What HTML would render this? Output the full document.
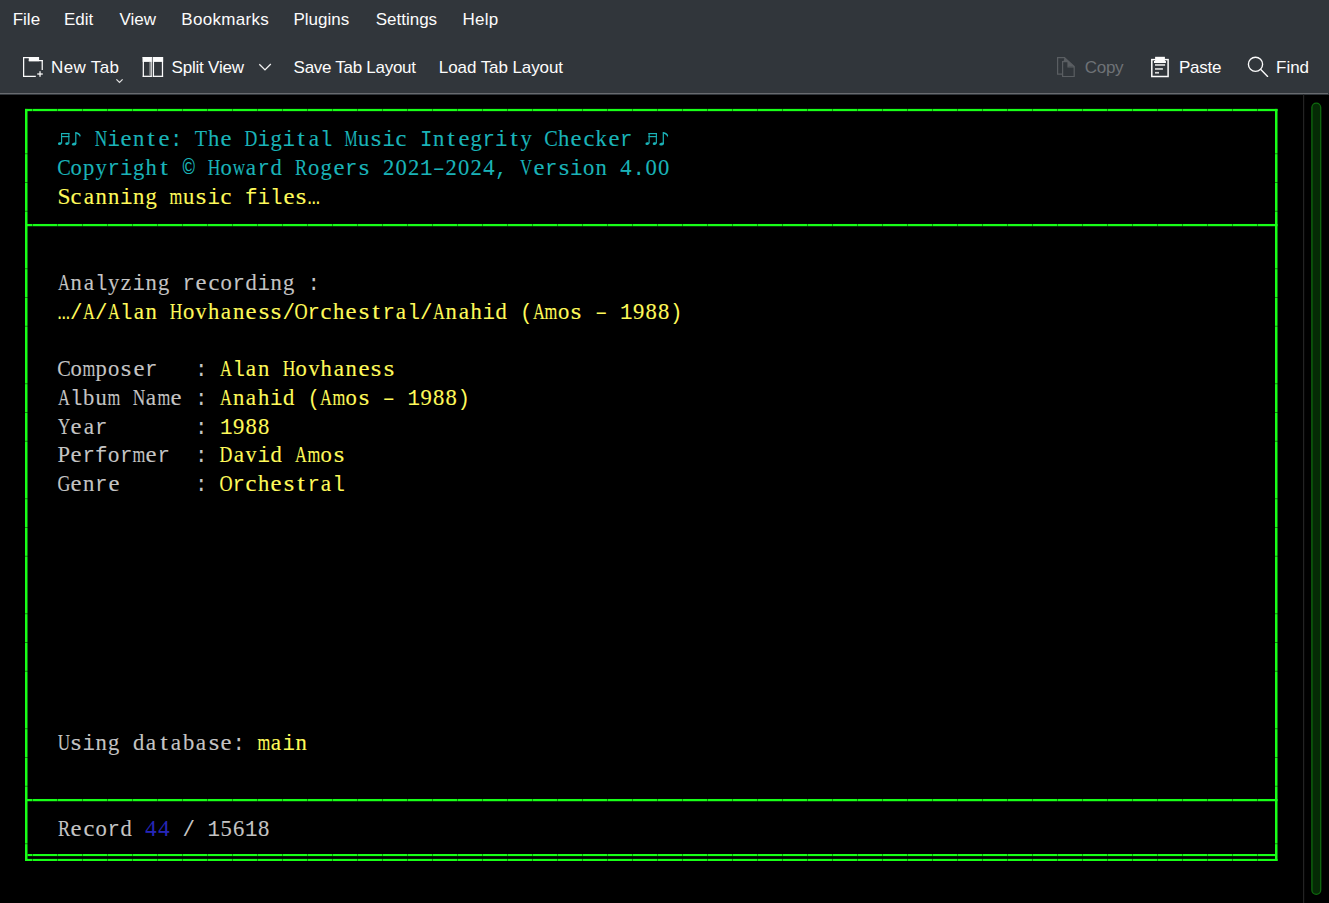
<!DOCTYPE html>
<html><head><meta charset="utf-8">
<style>
html,body{margin:0;padding:0}
body{width:1329px;height:903px;overflow:hidden;position:relative;background:#31363b;font-family:"Liberation Sans",sans-serif}
.ui{position:absolute;color:#fcfcfc;font-size:17px;line-height:20px;white-space:pre}
.sep{position:absolute;left:0;top:93px;width:1328px;height:1.3px;background:#686b6f}
.term{position:absolute;left:0;top:94.5px;width:1329px;height:809px;background:#000}
.t{position:absolute;left:57.5px;font-family:"Liberation Mono",monospace;font-size:20.83px;line-height:28.75px;white-space:pre;color:#c4c4c4;transform-origin:0 19px;transform:scaleY(1.05)}
.c{color:#1ab3b8}.y{color:#fffa5a}.g{color:#c4c4c4}.b{color:#2626b8}
svg{position:absolute;overflow:visible}
.ts{position:absolute;left:20px;width:1260px;height:28.75px;line-height:28.75px}.ts b{position:absolute;top:0;font-weight:normal;white-space:pre}.ts .s{top:0.30px;font-family:"Liberation Serif",serif;font-size:22.6px;-webkit-text-stroke:0.1px currentColor}.ts .m{top:2.3px;font-family:"Liberation Mono",monospace;font-size:20.83px;transform-origin:0 19px;transform:scaleY(1.05)}
</style></head><body>
<div class="ui" style="left:12.7px;top:10px">File</div>
<div class="ui" style="left:64px;top:10px">Edit</div>
<div class="ui" style="left:119.5px;top:10px">View</div>
<div class="ui" style="left:181.3px;top:10px;letter-spacing:0.3px">Bookmarks</div>
<div class="ui" style="left:293.5px;top:10px">Plugins</div>
<div class="ui" style="left:375.7px;top:10px">Settings</div>
<div class="ui" style="left:462.4px;top:10px;letter-spacing:0.3px">Help</div>

<svg style="left:0;top:0" width="1329" height="94" viewBox="0 0 1329 94">
 <!-- new tab icon -->
 <g fill="#fcfcfc">
  <rect x="23" y="57" width="1.25" height="20"/>
  <rect x="23" y="57" width="6" height="1.25"/>
  <rect x="28.8" y="57" width="10.3" height="4.2"/>
  <rect x="28.8" y="60" width="14" height="1.25"/>
  <rect x="41.6" y="60" width="1.25" height="10"/>
  <rect x="23" y="75.75" width="12.8" height="1.25"/>
  <rect x="37.2" y="73.4" width="5.6" height="1.25"/>
  <rect x="39.4" y="71.2" width="1.25" height="5.6"/>
 </g>
 <path d="M116.4 79.4 L119.5 82.4 L122.6 79.4" fill="none" stroke="#dedede" stroke-width="1.3"/>
 <!-- split view icon -->
 <g fill="#fcfcfc">
  <rect x="142.7" y="57" width="9" height="1.25"/>
  <rect x="142.7" y="57" width="9" height="4.9"/>
  <rect x="142.7" y="57" width="1.25" height="20"/>
  <rect x="142.7" y="75.7" width="9" height="1.25"/>
  <rect x="150.5" y="57" width="1.25" height="20"/>
  <rect x="152.8" y="57" width="10.3" height="4.9"/>
  <rect x="152.8" y="57" width="1.25" height="20"/>
  <rect x="152.8" y="75.7" width="10.3" height="1.25"/>
  <rect x="161.85" y="57" width="1.25" height="20"/>
 </g>
 <rect x="149.3" y="61.9" width="1.2" height="13.8" fill="#8a8d90"/>
 <path d="M259.3 64.2 L265 69.9 L270.8 64.1" fill="none" stroke="#f0f0f0" stroke-width="1.35"/>
 <!-- copy icon (disabled) -->
 <g fill="none" stroke="#5a5e62" stroke-width="1.2">
  <path d="M12.6 22.2 H7.6 V5.6 H14.5 L24.2 14.5 V24.5 H12.6 V9.6 H18 V15 H24.2" transform="translate(1050 52)"/>
 </g>
 <path d="M14.5 5.6 L24.2 14.5 H18 V9.6 H13.5 Z" transform="translate(1050 52)" fill="#5a5e62"/>
 <!-- paste icon -->
 <g transform="translate(1145 52)">
  <rect x="6.8" y="7.6" width="16.3" height="16.9" fill="none" stroke="#fcfcfc" stroke-width="1.5"/>
  <rect x="10.1" y="4.8" width="9.8" height="6.2" fill="#fcfcfc"/>
  <rect x="9" y="9" width="11.9" height="2" fill="#fcfcfc"/>
  <rect x="10" y="12.1" width="10.1" height="1.7" fill="#d8d8d8"/>
  <rect x="10" y="16.1" width="7.9" height="1.7" fill="#d8d8d8"/>
  <rect x="10" y="19.9" width="4" height="1.7" fill="#d8d8d8"/>
 </g>
 <!-- find icon -->
 <circle cx="1255.5" cy="64.3" r="7.1" fill="none" stroke="#fcfcfc" stroke-width="1.35"/>
 <path d="M1260.8 69.6 L1267.6 76.4" stroke="#fcfcfc" stroke-width="1.35" stroke-linecap="round"/>
</svg>

<div class="ui" style="left:51px;top:58px;letter-spacing:0.35px">New Tab</div>
<div class="ui" style="left:171.5px;top:58px;letter-spacing:-0.2px">Split View</div>
<div class="ui" style="left:293.6px;top:58px;letter-spacing:-0.28px">Save Tab Layout</div>
<div class="ui" style="left:438.8px;top:58px;letter-spacing:-0.08px">Load Tab Layout</div>
<div class="ui" style="left:1084.8px;top:58px;color:#6e7276;letter-spacing:-0.3px">Copy</div>
<div class="ui" style="left:1178.9px;top:58px;letter-spacing:-0.25px">Paste</div>
<div class="ui" style="left:1276px;top:58px">Find</div>
<div class="sep"></div>
<div class="term"></div>
<svg class="box" width="1329" height="903" viewBox="0 0 1329 903" style="position:absolute;left:0;top:0"><rect x="25.0" y="108.9" width="2.5" height="752.10" fill="#18ff18"/><rect x="1275.0" y="108.9" width="2.5" height="752.10" fill="#18ff18"/><rect x="25.0" y="108.9" width="1252.5" height="2.25" fill="#18ff18"/><rect x="25.0" y="223.97" width="1252.5" height="2.25" fill="#18ff18"/><rect x="25.0" y="798.98" width="1252.5" height="2.25" fill="#18ff18"/><rect x="27.5" y="854" width="1247.5" height="2.1" fill="#18ff18"/><rect x="25.0" y="858.9" width="1252.5" height="2.1" fill="#18ff18"/><line x1="32" y1="110.00" x2="1270" y2="110.00" stroke="#000" stroke-opacity="0.42" stroke-width="2.6" stroke-dasharray="1 24"/><line x1="32" y1="225.12" x2="1270" y2="225.12" stroke="#000" stroke-opacity="0.42" stroke-width="2.6" stroke-dasharray="1 24"/><line x1="32" y1="800.12" x2="1270" y2="800.12" stroke="#000" stroke-opacity="0.42" stroke-width="2.6" stroke-dasharray="1 24"/><line x1="32" y1="855.05" x2="1270" y2="855.05" stroke="#000" stroke-opacity="0.42" stroke-width="2.6" stroke-dasharray="1 24"/><line x1="32" y1="859.95" x2="1270" y2="859.95" stroke="#000" stroke-opacity="0.42" stroke-width="2.6" stroke-dasharray="1 24"/><g fill="#000" fill-opacity="0.45"><rect x="24.5" y="153.25" width="3.5" height="1"/><rect x="1274.5" y="153.25" width="3.5" height="1"/><rect x="24.5" y="182.00" width="3.5" height="1"/><rect x="1274.5" y="182.00" width="3.5" height="1"/><rect x="24.5" y="210.75" width="3.5" height="1"/><rect x="1274.5" y="210.75" width="3.5" height="1"/><rect x="24.5" y="268.25" width="3.5" height="1"/><rect x="1274.5" y="268.25" width="3.5" height="1"/><rect x="24.5" y="297.00" width="3.5" height="1"/><rect x="1274.5" y="297.00" width="3.5" height="1"/><rect x="24.5" y="325.75" width="3.5" height="1"/><rect x="1274.5" y="325.75" width="3.5" height="1"/><rect x="24.5" y="383.25" width="3.5" height="1"/><rect x="1274.5" y="383.25" width="3.5" height="1"/><rect x="24.5" y="412.00" width="3.5" height="1"/><rect x="1274.5" y="412.00" width="3.5" height="1"/><rect x="24.5" y="440.75" width="3.5" height="1"/><rect x="1274.5" y="440.75" width="3.5" height="1"/><rect x="24.5" y="498.25" width="3.5" height="1"/><rect x="1274.5" y="498.25" width="3.5" height="1"/><rect x="24.5" y="527.00" width="3.5" height="1"/><rect x="1274.5" y="527.00" width="3.5" height="1"/><rect x="24.5" y="555.75" width="3.5" height="1"/><rect x="1274.5" y="555.75" width="3.5" height="1"/><rect x="24.5" y="613.25" width="3.5" height="1"/><rect x="1274.5" y="613.25" width="3.5" height="1"/><rect x="24.5" y="642.00" width="3.5" height="1"/><rect x="1274.5" y="642.00" width="3.5" height="1"/><rect x="24.5" y="670.75" width="3.5" height="1"/><rect x="1274.5" y="670.75" width="3.5" height="1"/><rect x="24.5" y="728.25" width="3.5" height="1"/><rect x="1274.5" y="728.25" width="3.5" height="1"/><rect x="24.5" y="757.00" width="3.5" height="1"/><rect x="1274.5" y="757.00" width="3.5" height="1"/><rect x="24.5" y="785.75" width="3.5" height="1"/><rect x="1274.5" y="785.75" width="3.5" height="1"/><rect x="24.5" y="843.25" width="3.5" height="1"/><rect x="1274.5" y="843.25" width="3.5" height="1"/></g></svg>
<svg style="left:0;top:0" width="1329" height="903" viewBox="0 0 1329 903">
 <rect x="1303" y="94.5" width="1.2" height="809" fill="#232323"/>
 <rect x="1311.9" y="103.1" width="8.8" height="791.3" rx="4.4" ry="4.4" fill="#052a05" stroke="#0e6a0e" stroke-width="1.3"/>
</svg>

<svg style="left:0;top:0" width="1329" height="200" viewBox="0 0 1329 200">
<defs>
<g id="n2"><rect x="3.5" y="8.5" width="8.4" height="1.2"/><rect x="3.5" y="11.5" width="8.4" height="1.2"/><rect x="3.55" y="8.5" width="1.1" height="10.5"/><rect x="10.8" y="8.5" width="1.1" height="10.5"/><ellipse cx="2.3" cy="19.1" rx="1.9" ry="1.3" transform="rotate(-10 2.3 19.1)"/><ellipse cx="9.6" cy="19.1" rx="1.9" ry="1.3" transform="rotate(-10 9.6 19.1)"/></g>
<g id="n1"><rect x="5.2" y="7.6" width="1.2" height="12"/><ellipse cx="4.0" cy="19.6" rx="2.3" ry="1.45" transform="rotate(-10 4 19.6)"/><path d="M5.7 7.6 Q9.9 8.5 10.7 10.9 L9.8 12.9 Q10.1 10.8 5.7 9.1 Z"/></g>
</defs>
<g fill="#1ab3b8">
<use href="#n2" x="57.5" y="124.5"/><use href="#n1" x="70" y="124.5"/>
<use href="#n2" x="645" y="124.5"/><use href="#n1" x="657.5" y="124.5"/>
</g></svg>
<div class="ts" style="top:124.50px"><b class="c s" style="left:81.25px;transform:translateX(-50%) scaleX(0.766)">N</b><b class="c m" style="left:87.50px">i</b><b class="c s" style="left:106.25px;transform:translateX(-50%) scaleX(1.100)">e</b><b class="c s" style="left:118.75px;transform:translateX(-50%) scaleX(1.000)">n</b><b class="c s" style="left:131.25px;transform:translateX(-50%) scaleX(1.200)">t</b><b class="c s" style="left:143.75px;transform:translateX(-50%) scaleX(1.100)">e</b><b class="c m" style="left:150.00px">:</b><b class="c s" style="left:181.25px;transform:translateX(-50%) scaleX(0.891)">T</b><b class="c s" style="left:193.75px;transform:translateX(-50%) scaleX(1.000)">h</b><b class="c s" style="left:206.25px;transform:translateX(-50%) scaleX(1.100)">e</b><b class="c s" style="left:231.25px;transform:translateX(-50%) scaleX(0.786)">D</b><b class="c m" style="left:237.50px">i</b><b class="c s" style="left:256.25px;transform:translateX(-50%) scaleX(1.000)">g</b><b class="c m" style="left:262.50px">i</b><b class="c s" style="left:281.25px;transform:translateX(-50%) scaleX(1.200)">t</b><b class="c s" style="left:293.75px;transform:translateX(-50%) scaleX(1.031)">a</b><b class="c m" style="left:300.00px">l</b><b class="c s" style="left:331.25px;transform:translateX(-50%) scaleX(0.650)">M</b><b class="c s" style="left:343.75px;transform:translateX(-50%) scaleX(1.000)">u</b><b class="c s" style="left:356.25px;transform:translateX(-50%) scaleX(1.200)">s</b><b class="c m" style="left:362.50px">i</b><b class="c s" style="left:381.25px;transform:translateX(-50%) scaleX(1.086)">c</b><b class="c m" style="left:400.00px">I</b><b class="c s" style="left:418.75px;transform:translateX(-50%) scaleX(1.000)">n</b><b class="c s" style="left:431.25px;transform:translateX(-50%) scaleX(1.200)">t</b><b class="c s" style="left:443.75px;transform:translateX(-50%) scaleX(1.100)">e</b><b class="c s" style="left:456.25px;transform:translateX(-50%) scaleX(1.000)">g</b><b class="c m" style="left:462.50px">r</b><b class="c m" style="left:475.00px">i</b><b class="c s" style="left:493.75px;transform:translateX(-50%) scaleX(1.200)">t</b><b class="c s" style="left:506.25px;transform:translateX(-50%) scaleX(1.000)">y</b><b class="c s" style="left:531.25px;transform:translateX(-50%) scaleX(0.899)">C</b><b class="c s" style="left:543.75px;transform:translateX(-50%) scaleX(1.000)">h</b><b class="c s" style="left:556.25px;transform:translateX(-50%) scaleX(1.100)">e</b><b class="c s" style="left:568.75px;transform:translateX(-50%) scaleX(1.086)">c</b><b class="c s" style="left:581.25px;transform:translateX(-50%) scaleX(1.000)">k</b><b class="c s" style="left:593.75px;transform:translateX(-50%) scaleX(1.100)">e</b><b class="c m" style="left:600.00px">r</b></div>
<div class="ts" style="top:153.25px"><b class="c s" style="left:43.75px;transform:translateX(-50%) scaleX(0.899)">C</b><b class="c s" style="left:56.25px;transform:translateX(-50%) scaleX(1.000)">o</b><b class="c s" style="left:68.75px;transform:translateX(-50%) scaleX(1.000)">p</b><b class="c s" style="left:81.25px;transform:translateX(-50%) scaleX(1.000)">y</b><b class="c m" style="left:87.50px">r</b><b class="c m" style="left:100.00px">i</b><b class="c s" style="left:118.75px;transform:translateX(-50%) scaleX(1.000)">g</b><b class="c s" style="left:131.25px;transform:translateX(-50%) scaleX(1.000)">h</b><b class="c s" style="left:143.75px;transform:translateX(-50%) scaleX(1.200)">t</b><b class="c m" style="left:162.50px">©</b><b class="c s" style="left:193.75px;transform:translateX(-50%) scaleX(0.773)">H</b><b class="c s" style="left:206.25px;transform:translateX(-50%) scaleX(1.000)">o</b><b class="c s" style="left:218.75px;transform:translateX(-50%) scaleX(0.753)">w</b><b class="c s" style="left:231.25px;transform:translateX(-50%) scaleX(1.031)">a</b><b class="c m" style="left:237.50px">r</b><b class="c s" style="left:256.25px;transform:translateX(-50%) scaleX(1.000)">d</b><b class="c s" style="left:281.25px;transform:translateX(-50%) scaleX(0.806)">R</b><b class="c s" style="left:293.75px;transform:translateX(-50%) scaleX(1.000)">o</b><b class="c s" style="left:306.25px;transform:translateX(-50%) scaleX(1.000)">g</b><b class="c s" style="left:318.75px;transform:translateX(-50%) scaleX(1.100)">e</b><b class="c m" style="left:325.00px">r</b><b class="c s" style="left:343.75px;transform:translateX(-50%) scaleX(1.200)">s</b><b class="c s" style="left:368.75px;transform:translateX(-50%) scaleX(1.000)">2</b><b class="c s" style="left:381.25px;transform:translateX(-50%) scaleX(1.000)">0</b><b class="c s" style="left:393.75px;transform:translateX(-50%) scaleX(1.000)">2</b><b class="c m" style="left:400.00px">1</b><b class="c m" style="left:412.50px">–</b><b class="c s" style="left:431.25px;transform:translateX(-50%) scaleX(1.000)">2</b><b class="c s" style="left:443.75px;transform:translateX(-50%) scaleX(1.000)">0</b><b class="c s" style="left:456.25px;transform:translateX(-50%) scaleX(1.000)">2</b><b class="c s" style="left:468.75px;transform:translateX(-50%) scaleX(0.999)">4</b><b class="c m" style="left:475.00px">,</b><b class="c s" style="left:506.25px;transform:translateX(-50%) scaleX(0.734)">V</b><b class="c s" style="left:518.75px;transform:translateX(-50%) scaleX(1.100)">e</b><b class="c m" style="left:525.00px">r</b><b class="c s" style="left:543.75px;transform:translateX(-50%) scaleX(1.200)">s</b><b class="c m" style="left:550.00px">i</b><b class="c s" style="left:568.75px;transform:translateX(-50%) scaleX(1.000)">o</b><b class="c s" style="left:581.25px;transform:translateX(-50%) scaleX(1.000)">n</b><b class="c s" style="left:606.25px;transform:translateX(-50%) scaleX(0.999)">4</b><b class="c m" style="left:612.50px">.</b><b class="c s" style="left:631.25px;transform:translateX(-50%) scaleX(1.000)">0</b><b class="c s" style="left:643.75px;transform:translateX(-50%) scaleX(1.000)">0</b></div>
<div class="ts" style="top:182.45px"><b class="y s" style="left:43.75px;transform:translateX(-50%) scaleX(1.036)">S</b><b class="y s" style="left:56.25px;transform:translateX(-50%) scaleX(1.086)">c</b><b class="y s" style="left:68.75px;transform:translateX(-50%) scaleX(1.031)">a</b><b class="y s" style="left:81.25px;transform:translateX(-50%) scaleX(1.000)">n</b><b class="y s" style="left:93.75px;transform:translateX(-50%) scaleX(1.000)">n</b><b class="y m" style="left:100.00px">i</b><b class="y s" style="left:118.75px;transform:translateX(-50%) scaleX(1.000)">n</b><b class="y s" style="left:131.25px;transform:translateX(-50%) scaleX(1.000)">g</b><b class="y s" style="left:156.25px;transform:translateX(-50%) scaleX(0.728)">m</b><b class="y s" style="left:168.75px;transform:translateX(-50%) scaleX(1.000)">u</b><b class="y s" style="left:181.25px;transform:translateX(-50%) scaleX(1.200)">s</b><b class="y m" style="left:187.50px">i</b><b class="y s" style="left:206.25px;transform:translateX(-50%) scaleX(1.086)">c</b><b class="y m" style="left:225.00px">f</b><b class="y m" style="left:237.50px">i</b><b class="y m" style="left:250.00px">l</b><b class="y s" style="left:268.75px;transform:translateX(-50%) scaleX(1.100)">e</b><b class="y s" style="left:281.25px;transform:translateX(-50%) scaleX(1.200)">s</b><b class="y m" style="left:287.50px">…</b></div>
<div class="ts" style="top:268.25px"><b class="g s" style="left:43.75px;transform:translateX(-50%) scaleX(0.728)">A</b><b class="g s" style="left:56.25px;transform:translateX(-50%) scaleX(1.000)">n</b><b class="g s" style="left:68.75px;transform:translateX(-50%) scaleX(1.031)">a</b><b class="g m" style="left:75.00px">l</b><b class="g s" style="left:93.75px;transform:translateX(-50%) scaleX(1.000)">y</b><b class="g s" style="left:106.25px;transform:translateX(-50%) scaleX(1.046)">z</b><b class="g m" style="left:112.50px">i</b><b class="g s" style="left:131.25px;transform:translateX(-50%) scaleX(1.000)">n</b><b class="g s" style="left:143.75px;transform:translateX(-50%) scaleX(1.000)">g</b><b class="g m" style="left:162.50px">r</b><b class="g s" style="left:181.25px;transform:translateX(-50%) scaleX(1.100)">e</b><b class="g s" style="left:193.75px;transform:translateX(-50%) scaleX(1.086)">c</b><b class="g s" style="left:206.25px;transform:translateX(-50%) scaleX(1.000)">o</b><b class="g m" style="left:212.50px">r</b><b class="g s" style="left:231.25px;transform:translateX(-50%) scaleX(1.000)">d</b><b class="g m" style="left:237.50px">i</b><b class="g s" style="left:256.25px;transform:translateX(-50%) scaleX(1.000)">n</b><b class="g s" style="left:268.75px;transform:translateX(-50%) scaleX(1.000)">g</b><b class="g m" style="left:287.50px">:</b></div>
<div class="ts" style="top:297.45px"><b class="y m" style="left:37.50px">…</b><b class="y m" style="left:50.00px">/</b><b class="y s" style="left:68.75px;transform:translateX(-50%) scaleX(0.728)">A</b><b class="y m" style="left:75.00px">/</b><b class="y s" style="left:93.75px;transform:translateX(-50%) scaleX(0.728)">A</b><b class="y m" style="left:100.00px">l</b><b class="y s" style="left:118.75px;transform:translateX(-50%) scaleX(1.031)">a</b><b class="y s" style="left:131.25px;transform:translateX(-50%) scaleX(1.000)">n</b><b class="y s" style="left:156.25px;transform:translateX(-50%) scaleX(0.773)">H</b><b class="y s" style="left:168.75px;transform:translateX(-50%) scaleX(1.000)">o</b><b class="y s" style="left:181.25px;transform:translateX(-50%) scaleX(0.973)">v</b><b class="y s" style="left:193.75px;transform:translateX(-50%) scaleX(1.000)">h</b><b class="y s" style="left:206.25px;transform:translateX(-50%) scaleX(1.031)">a</b><b class="y s" style="left:218.75px;transform:translateX(-50%) scaleX(1.000)">n</b><b class="y s" style="left:231.25px;transform:translateX(-50%) scaleX(1.100)">e</b><b class="y s" style="left:243.75px;transform:translateX(-50%) scaleX(1.200)">s</b><b class="y s" style="left:256.25px;transform:translateX(-50%) scaleX(1.200)">s</b><b class="y m" style="left:262.50px">/</b><b class="y s" style="left:281.25px;transform:translateX(-50%) scaleX(0.802)">O</b><b class="y m" style="left:287.50px">r</b><b class="y s" style="left:306.25px;transform:translateX(-50%) scaleX(1.086)">c</b><b class="y s" style="left:318.75px;transform:translateX(-50%) scaleX(1.000)">h</b><b class="y s" style="left:331.25px;transform:translateX(-50%) scaleX(1.100)">e</b><b class="y s" style="left:343.75px;transform:translateX(-50%) scaleX(1.200)">s</b><b class="y s" style="left:356.25px;transform:translateX(-50%) scaleX(1.200)">t</b><b class="y m" style="left:362.50px">r</b><b class="y s" style="left:381.25px;transform:translateX(-50%) scaleX(1.031)">a</b><b class="y m" style="left:387.50px">l</b><b class="y m" style="left:400.00px">/</b><b class="y s" style="left:418.75px;transform:translateX(-50%) scaleX(0.728)">A</b><b class="y s" style="left:431.25px;transform:translateX(-50%) scaleX(1.000)">n</b><b class="y s" style="left:443.75px;transform:translateX(-50%) scaleX(1.031)">a</b><b class="y s" style="left:456.25px;transform:translateX(-50%) scaleX(1.000)">h</b><b class="y m" style="left:462.50px">i</b><b class="y s" style="left:481.25px;transform:translateX(-50%) scaleX(1.000)">d</b><b class="y m" style="left:500.00px">(</b><b class="y s" style="left:518.75px;transform:translateX(-50%) scaleX(0.728)">A</b><b class="y s" style="left:531.25px;transform:translateX(-50%) scaleX(0.728)">m</b><b class="y s" style="left:543.75px;transform:translateX(-50%) scaleX(1.000)">o</b><b class="y s" style="left:556.25px;transform:translateX(-50%) scaleX(1.200)">s</b><b class="y m" style="left:575.00px">–</b><b class="y m" style="left:600.00px">1</b><b class="y s" style="left:618.75px;transform:translateX(-50%) scaleX(1.000)">9</b><b class="y s" style="left:631.25px;transform:translateX(-50%) scaleX(1.000)">8</b><b class="y s" style="left:643.75px;transform:translateX(-50%) scaleX(1.000)">8</b><b class="y m" style="left:650.00px">)</b></div>
<div class="ts" style="top:354.50px"><b class="g s" style="left:43.75px;transform:translateX(-50%) scaleX(0.899)">C</b><b class="g s" style="left:56.25px;transform:translateX(-50%) scaleX(1.000)">o</b><b class="g s" style="left:68.75px;transform:translateX(-50%) scaleX(0.728)">m</b><b class="g s" style="left:81.25px;transform:translateX(-50%) scaleX(1.000)">p</b><b class="g s" style="left:93.75px;transform:translateX(-50%) scaleX(1.000)">o</b><b class="g s" style="left:106.25px;transform:translateX(-50%) scaleX(1.200)">s</b><b class="g s" style="left:118.75px;transform:translateX(-50%) scaleX(1.100)">e</b><b class="g m" style="left:125.00px">r</b><b class="g m" style="left:175.00px">:</b><b class="y s" style="left:206.25px;transform:translateX(-50%) scaleX(0.728)">A</b><b class="y m" style="left:212.50px">l</b><b class="y s" style="left:231.25px;transform:translateX(-50%) scaleX(1.031)">a</b><b class="y s" style="left:243.75px;transform:translateX(-50%) scaleX(1.000)">n</b><b class="y s" style="left:268.75px;transform:translateX(-50%) scaleX(0.773)">H</b><b class="y s" style="left:281.25px;transform:translateX(-50%) scaleX(1.000)">o</b><b class="y s" style="left:293.75px;transform:translateX(-50%) scaleX(0.973)">v</b><b class="y s" style="left:306.25px;transform:translateX(-50%) scaleX(1.000)">h</b><b class="y s" style="left:318.75px;transform:translateX(-50%) scaleX(1.031)">a</b><b class="y s" style="left:331.25px;transform:translateX(-50%) scaleX(1.000)">n</b><b class="y s" style="left:343.75px;transform:translateX(-50%) scaleX(1.100)">e</b><b class="y s" style="left:356.25px;transform:translateX(-50%) scaleX(1.200)">s</b><b class="y s" style="left:368.75px;transform:translateX(-50%) scaleX(1.200)">s</b></div>
<div class="ts" style="top:383.25px"><b class="g s" style="left:43.75px;transform:translateX(-50%) scaleX(0.728)">A</b><b class="g m" style="left:50.00px">l</b><b class="g s" style="left:68.75px;transform:translateX(-50%) scaleX(1.000)">b</b><b class="g s" style="left:81.25px;transform:translateX(-50%) scaleX(1.000)">u</b><b class="g s" style="left:93.75px;transform:translateX(-50%) scaleX(0.728)">m</b><b class="g s" style="left:118.75px;transform:translateX(-50%) scaleX(0.766)">N</b><b class="g s" style="left:131.25px;transform:translateX(-50%) scaleX(1.031)">a</b><b class="g s" style="left:143.75px;transform:translateX(-50%) scaleX(0.728)">m</b><b class="g s" style="left:156.25px;transform:translateX(-50%) scaleX(1.100)">e</b><b class="g m" style="left:175.00px">:</b><b class="y s" style="left:206.25px;transform:translateX(-50%) scaleX(0.728)">A</b><b class="y s" style="left:218.75px;transform:translateX(-50%) scaleX(1.000)">n</b><b class="y s" style="left:231.25px;transform:translateX(-50%) scaleX(1.031)">a</b><b class="y s" style="left:243.75px;transform:translateX(-50%) scaleX(1.000)">h</b><b class="y m" style="left:250.00px">i</b><b class="y s" style="left:268.75px;transform:translateX(-50%) scaleX(1.000)">d</b><b class="y m" style="left:287.50px">(</b><b class="y s" style="left:306.25px;transform:translateX(-50%) scaleX(0.728)">A</b><b class="y s" style="left:318.75px;transform:translateX(-50%) scaleX(0.728)">m</b><b class="y s" style="left:331.25px;transform:translateX(-50%) scaleX(1.000)">o</b><b class="y s" style="left:343.75px;transform:translateX(-50%) scaleX(1.200)">s</b><b class="y m" style="left:362.50px">–</b><b class="y m" style="left:387.50px">1</b><b class="y s" style="left:406.25px;transform:translateX(-50%) scaleX(1.000)">9</b><b class="y s" style="left:418.75px;transform:translateX(-50%) scaleX(1.000)">8</b><b class="y s" style="left:431.25px;transform:translateX(-50%) scaleX(1.000)">8</b><b class="y m" style="left:437.50px">)</b></div>
<div class="ts" style="top:412.45px"><b class="g s" style="left:43.75px;transform:translateX(-50%) scaleX(0.749)">Y</b><b class="g s" style="left:56.25px;transform:translateX(-50%) scaleX(1.100)">e</b><b class="g s" style="left:68.75px;transform:translateX(-50%) scaleX(1.031)">a</b><b class="g m" style="left:75.00px">r</b><b class="g m" style="left:175.00px">:</b><b class="y m" style="left:200.00px">1</b><b class="y s" style="left:218.75px;transform:translateX(-50%) scaleX(1.000)">9</b><b class="y s" style="left:231.25px;transform:translateX(-50%) scaleX(1.000)">8</b><b class="y s" style="left:243.75px;transform:translateX(-50%) scaleX(1.000)">8</b></div>
<div class="ts" style="top:440.75px"><b class="g s" style="left:43.75px;transform:translateX(-50%) scaleX(1.000)">P</b><b class="g s" style="left:56.25px;transform:translateX(-50%) scaleX(1.100)">e</b><b class="g m" style="left:62.50px">r</b><b class="g m" style="left:75.00px">f</b><b class="g s" style="left:93.75px;transform:translateX(-50%) scaleX(1.000)">o</b><b class="g m" style="left:100.00px">r</b><b class="g s" style="left:118.75px;transform:translateX(-50%) scaleX(0.728)">m</b><b class="g s" style="left:131.25px;transform:translateX(-50%) scaleX(1.100)">e</b><b class="g m" style="left:137.50px">r</b><b class="g m" style="left:175.00px">:</b><b class="y s" style="left:206.25px;transform:translateX(-50%) scaleX(0.786)">D</b><b class="y s" style="left:218.75px;transform:translateX(-50%) scaleX(1.031)">a</b><b class="y s" style="left:231.25px;transform:translateX(-50%) scaleX(0.973)">v</b><b class="y m" style="left:237.50px">i</b><b class="y s" style="left:256.25px;transform:translateX(-50%) scaleX(1.000)">d</b><b class="y s" style="left:281.25px;transform:translateX(-50%) scaleX(0.728)">A</b><b class="y s" style="left:293.75px;transform:translateX(-50%) scaleX(0.728)">m</b><b class="y s" style="left:306.25px;transform:translateX(-50%) scaleX(1.000)">o</b><b class="y s" style="left:318.75px;transform:translateX(-50%) scaleX(1.200)">s</b></div>
<div class="ts" style="top:469.50px"><b class="g s" style="left:43.75px;transform:translateX(-50%) scaleX(0.790)">G</b><b class="g s" style="left:56.25px;transform:translateX(-50%) scaleX(1.100)">e</b><b class="g s" style="left:68.75px;transform:translateX(-50%) scaleX(1.000)">n</b><b class="g m" style="left:75.00px">r</b><b class="g s" style="left:93.75px;transform:translateX(-50%) scaleX(1.100)">e</b><b class="g m" style="left:175.00px">:</b><b class="y s" style="left:206.25px;transform:translateX(-50%) scaleX(0.802)">O</b><b class="y m" style="left:212.50px">r</b><b class="y s" style="left:231.25px;transform:translateX(-50%) scaleX(1.086)">c</b><b class="y s" style="left:243.75px;transform:translateX(-50%) scaleX(1.000)">h</b><b class="y s" style="left:256.25px;transform:translateX(-50%) scaleX(1.100)">e</b><b class="y s" style="left:268.75px;transform:translateX(-50%) scaleX(1.200)">s</b><b class="y s" style="left:281.25px;transform:translateX(-50%) scaleX(1.200)">t</b><b class="y m" style="left:287.50px">r</b><b class="y s" style="left:306.25px;transform:translateX(-50%) scaleX(1.031)">a</b><b class="y m" style="left:312.50px">l</b></div>
<div class="ts" style="top:728.25px"><b class="g s" style="left:43.75px;transform:translateX(-50%) scaleX(0.755)">U</b><b class="g s" style="left:56.25px;transform:translateX(-50%) scaleX(1.200)">s</b><b class="g m" style="left:62.50px">i</b><b class="g s" style="left:81.25px;transform:translateX(-50%) scaleX(1.000)">n</b><b class="g s" style="left:93.75px;transform:translateX(-50%) scaleX(1.000)">g</b><b class="g s" style="left:118.75px;transform:translateX(-50%) scaleX(1.000)">d</b><b class="g s" style="left:131.25px;transform:translateX(-50%) scaleX(1.031)">a</b><b class="g s" style="left:143.75px;transform:translateX(-50%) scaleX(1.200)">t</b><b class="g s" style="left:156.25px;transform:translateX(-50%) scaleX(1.031)">a</b><b class="g s" style="left:168.75px;transform:translateX(-50%) scaleX(1.000)">b</b><b class="g s" style="left:181.25px;transform:translateX(-50%) scaleX(1.031)">a</b><b class="g s" style="left:193.75px;transform:translateX(-50%) scaleX(1.200)">s</b><b class="g s" style="left:206.25px;transform:translateX(-50%) scaleX(1.100)">e</b><b class="g m" style="left:212.50px">:</b><b class="y s" style="left:243.75px;transform:translateX(-50%) scaleX(0.728)">m</b><b class="y s" style="left:256.25px;transform:translateX(-50%) scaleX(1.031)">a</b><b class="y m" style="left:262.50px">i</b><b class="y s" style="left:281.25px;transform:translateX(-50%) scaleX(1.000)">n</b></div>
<div class="ts" style="top:814.50px"><b class="g s" style="left:43.75px;transform:translateX(-50%) scaleX(0.806)">R</b><b class="g s" style="left:56.25px;transform:translateX(-50%) scaleX(1.100)">e</b><b class="g s" style="left:68.75px;transform:translateX(-50%) scaleX(1.086)">c</b><b class="g s" style="left:81.25px;transform:translateX(-50%) scaleX(1.000)">o</b><b class="g m" style="left:87.50px">r</b><b class="g s" style="left:106.25px;transform:translateX(-50%) scaleX(1.000)">d</b><b class="b s" style="left:131.25px;transform:translateX(-50%) scaleX(0.999)">4</b><b class="b s" style="left:143.75px;transform:translateX(-50%) scaleX(0.999)">4</b><b class="g m" style="left:162.50px">/</b><b class="g m" style="left:187.50px">1</b><b class="g s" style="left:206.25px;transform:translateX(-50%) scaleX(1.000)">5</b><b class="g s" style="left:218.75px;transform:translateX(-50%) scaleX(1.000)">6</b><b class="g m" style="left:225.00px">1</b><b class="g s" style="left:243.75px;transform:translateX(-50%) scaleX(1.000)">8</b></div>
</body></html>
